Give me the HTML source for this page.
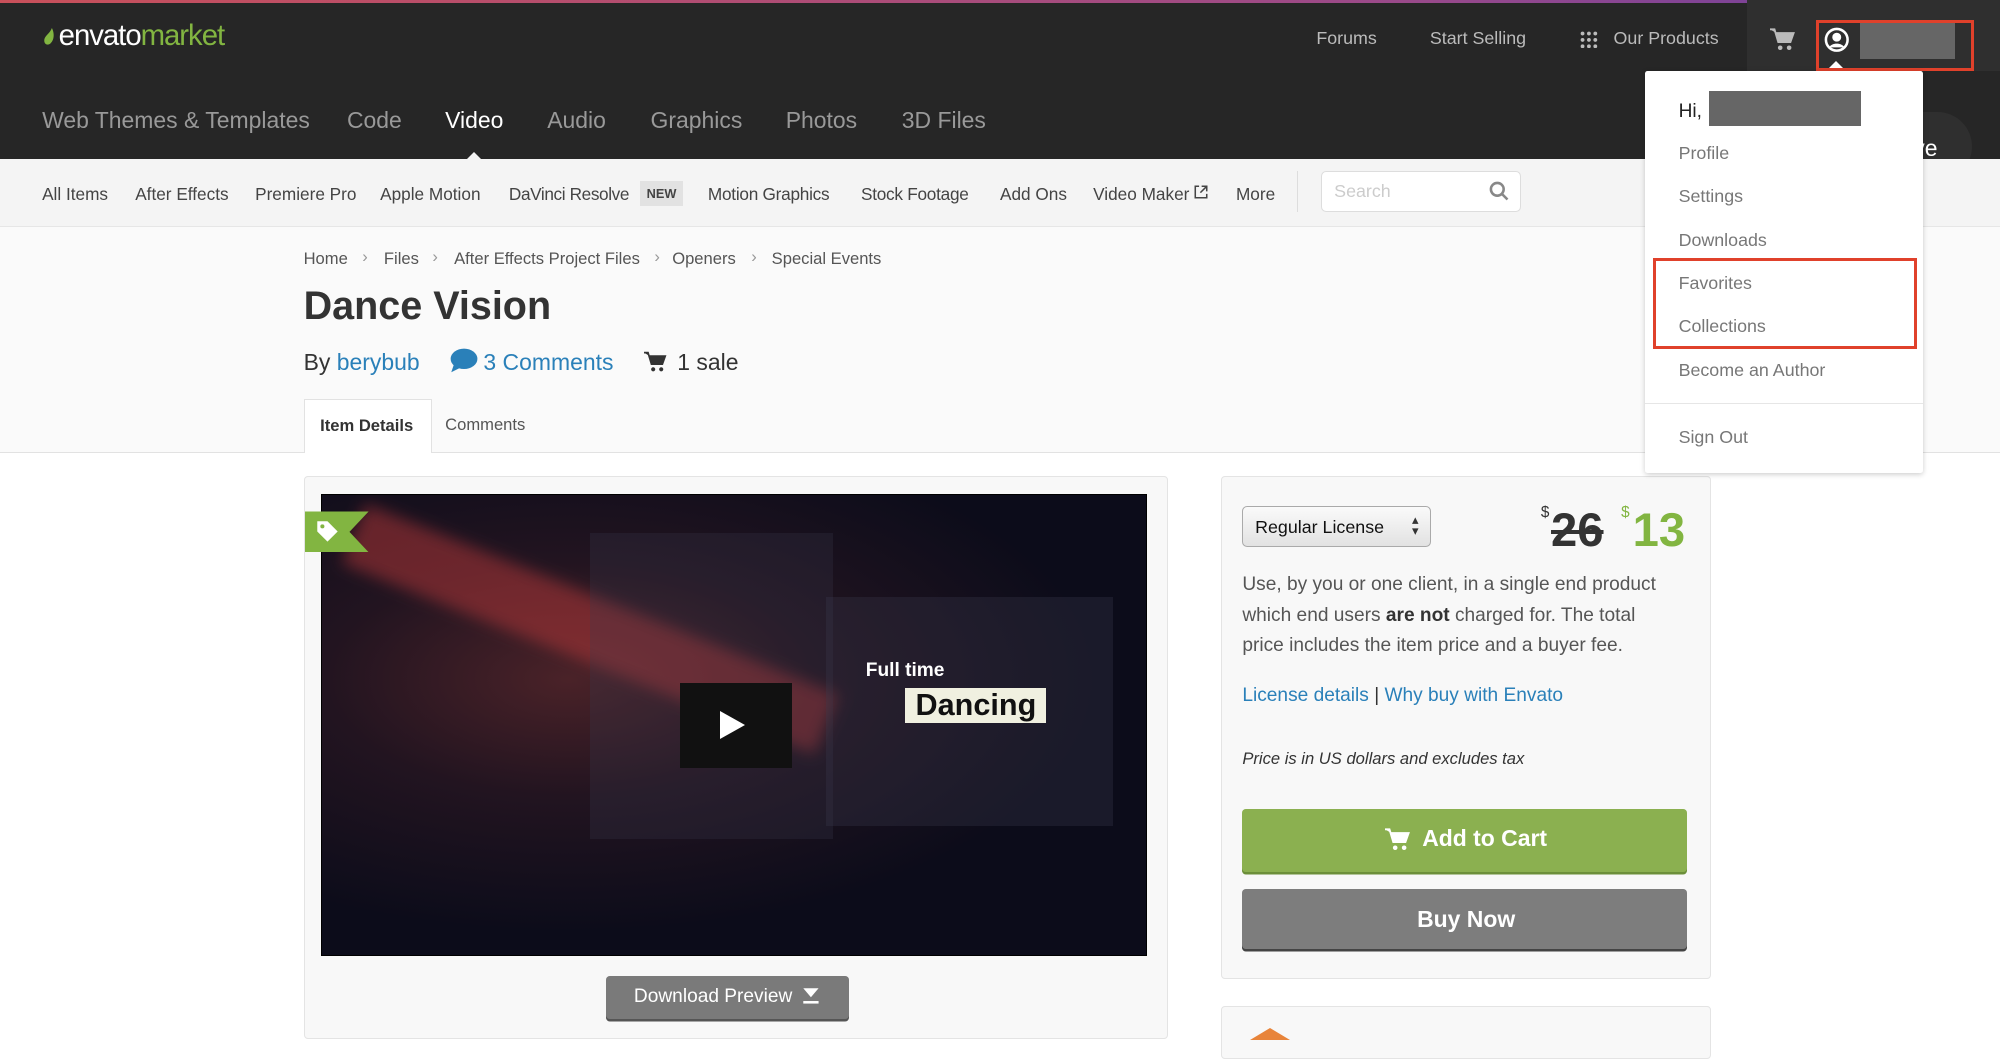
<!DOCTYPE html>
<html><head><meta charset="utf-8"><style>
html{zoom:1.27551}
body{margin:0;width:1568px;height:816px;overflow:hidden;position:relative;background:#fff;font-family:"Liberation Sans",sans-serif;color:#333}
.a{position:absolute;white-space:nowrap}
.top{position:absolute;left:0;top:0;width:1568px;height:125px;background:#262626}
.grad{position:absolute;left:0;top:0;width:1568px;height:2px;background:linear-gradient(90deg,#c8505a,#9a4a8a 70%,#6a3ea0)}
.cat{font-size:18px;color:#999;top:84px}
.sub{position:absolute;left:0;top:125px;width:1568px;height:52px;background:#f4f4f4;border-bottom:1px solid #e6e6e6}
.hero{position:absolute;left:0;top:178px;width:1568px;height:176px;background:#fafafa;border-bottom:1px solid #e2e2e2}
.dd{position:absolute;left:1290px;top:56px;width:218px;height:315px;background:#fff;box-shadow:0 1px 4px rgba(0,0,0,.2);border-radius:2px}
.dd span{font-size:14px;color:#777;left:26px}
.red{position:absolute;border:3px solid #e0412b;box-sizing:border-box}
.s{font-size:13.5px;color:#444;top:144px}
</style></head><body>
<div class="top"></div><div class="grad"></div>
<svg class="a" style="left:34px;top:22px" width="10" height="14" viewBox="0 0 10 14"><path d="M7 0C9 4 9 9 6 12C4 14 1 13 1 10C1 6 5 5 7 0Z" fill="#82b541"/></svg>
<div class="a" style="left:46px;top:15px;font-size:23px;color:#fff;letter-spacing:-0.8px">envato<span style="color:#82b541">market</span></div>
<div class="a" style="left:1032px;top:22px;font-size:14px;color:#bbb">Forums</div>
<div class="a" style="left:1121px;top:22px;font-size:14px;color:#bbb">Start Selling</div>
<svg class="a" style="left:1239px;top:24px" width="14" height="14" viewBox="0 0 14 14" fill="#bbb"><circle cx="2" cy="2" r="1.5"/><circle cx="7" cy="2" r="1.5"/><circle cx="12" cy="2" r="1.5"/><circle cx="2" cy="7" r="1.5"/><circle cx="7" cy="7" r="1.5"/><circle cx="12" cy="7" r="1.5"/><circle cx="2" cy="12" r="1.5"/><circle cx="7" cy="12" r="1.5"/><circle cx="12" cy="12" r="1.5"/></svg>
<div class="a" style="left:1265px;top:22px;font-size:14px;color:#bbb">Our Products</div>
<div class="a" style="left:1370px;top:0;width:200px;height:56px;background:#2f2f2f"></div>
<svg class="a" style="left:1388px;top:22px" width="20" height="18" viewBox="0 0 20 18"><path d="M0 1h3.5l3 10h9.5l2.5-7H5" fill="#bbb" stroke="#bbb" stroke-width="1.5"/><circle cx="8" cy="15.5" r="1.8" fill="#bbb"/><circle cx="15" cy="15.5" r="1.8" fill="#bbb"/></svg>
<svg class="a" style="left:1430px;top:21px" width="20" height="20" viewBox="0 0 20 20"><circle cx="10" cy="10" r="8.5" fill="none" stroke="#fff" stroke-width="2"/><circle cx="10" cy="8" r="3.5" fill="#fff"/><path d="M4 16c2-4 10-4 12 0" fill="#fff"/></svg>
<div class="a" style="left:1458px;top:18px;width:75px;height:28px;background:#666"></div>
<div class="red" style="left:1424px;top:16px;width:124px;height:40px"></div>
<div class="a" style="left:1434px;top:48px;width:0;height:0;border:6px solid transparent;border-bottom-color:#fff;border-top:0"></div>
<div class="a cat" style="left:33px">Web Themes &amp; Templates</div>
<div class="a cat" style="left:272px">Code</div>
<div class="a cat" style="left:349px;color:#fff">Video</div>
<div class="a cat" style="left:429px">Audio</div>
<div class="a cat" style="left:510px">Graphics</div>
<div class="a cat" style="left:616px">Photos</div>
<div class="a cat" style="left:707px">3D Files</div>
<div class="a" style="left:1480px;top:88px;width:66px;height:54px;background:#2f2f2f;border-radius:0 27px 27px 0"></div>
<div class="a" style="left:1500px;top:106px;font-size:18px;color:#fff">ve</div>
<div class="sub"></div>
<div class="a" style="left:366px;top:119px;border:6px solid transparent;border-bottom-color:#f4f4f4;border-top:0"></div>
<span class="a s" style="left:33px">All Items</span>
<span class="a s" style="left:106px">After Effects</span>
<span class="a s" style="left:200px">Premiere Pro</span>
<span class="a s" style="left:298px">Apple Motion</span>
<span class="a s" style="left:399px;letter-spacing:-0.3px">DaVinci Resolve</span>
<span class="a" style="left:502px;top:142px;font-size:10px;color:#444;background:#e2e2e2;padding:4px 5px;font-weight:bold">NEW</span>
<span class="a s" style="left:555px;letter-spacing:-0.2px">Motion Graphics</span>
<span class="a s" style="left:675px;letter-spacing:-0.2px">Stock Footage</span>
<span class="a s" style="left:784px">Add Ons</span>
<span class="a s" style="left:857px">Video Maker</span>
<svg class="a" style="left:936px;top:145px" width="11" height="11" viewBox="0 0 11 11"><path d="M4 1H1v9h9V7M6 1h4v4M10 1L5 6" fill="none" stroke="#444" stroke-width="1.2"/></svg>
<span class="a s" style="left:969px">More</span>
<div class="a" style="left:1017px;top:134px;width:1px;height:32px;background:#ddd"></div>
<div class="a" style="left:1036px;top:134px;width:155px;height:31px;background:#fff;border:1px solid #ddd;border-radius:4px"></div>
<div class="a" style="left:1046px;top:142px;font-size:14px;color:#ccc">Search</div>
<svg class="a" style="left:1167px;top:142px" width="16" height="16" viewBox="0 0 16 16"><circle cx="6.5" cy="6.5" r="5" fill="none" stroke="#888" stroke-width="2"/><path d="M10 10l4.5 4.5" stroke="#888" stroke-width="2"/></svg>
<div class="hero"></div>
<div class="a" style="left:238px;top:195px;font-size:13px;color:#555">Home</div>
<div class="a" style="left:301px;top:195px;font-size:13px;color:#555">Files</div>
<div class="a" style="left:356px;top:195px;font-size:13px;color:#555">After Effects Project Files</div>
<div class="a" style="left:527px;top:195px;font-size:13px;color:#555">Openers</div>
<div class="a" style="left:605px;top:195px;font-size:13px;color:#555">Special Events</div>
<div class="a" style="left:284px;top:194px;font-size:13px;color:#999">›</div>
<div class="a" style="left:339px;top:194px;font-size:13px;color:#999">›</div>
<div class="a" style="left:513px;top:194px;font-size:13px;color:#999">›</div>
<div class="a" style="left:589px;top:194px;font-size:13px;color:#999">›</div>
<div class="a" style="left:238px;top:223px;font-size:31px;font-weight:bold;color:#333">Dance Vision</div>
<div class="a" style="left:238px;top:274px;font-size:18px;color:#333">By <span style="color:#2a80b9">berybub</span></div>
<svg class="a" style="left:353px;top:273px" width="22" height="20" viewBox="0 0 22 20"><ellipse cx="11" cy="8.5" rx="10.5" ry="8" fill="#2a80b9"/><path d="M3 13L1 19L9 15Z" fill="#2a80b9"/></svg>
<div class="a" style="left:379px;top:274px;font-size:18px;color:#2a80b9">3 Comments</div>
<svg class="a" style="left:505px;top:275px" width="18" height="17" viewBox="0 0 20 18"><path d="M0 1h3.5l3 10h9.5l2.5-7H5" fill="#333" stroke="#333" stroke-width="1.5"/><circle cx="8" cy="15.5" r="1.8" fill="#333"/><circle cx="15" cy="15.5" r="1.8" fill="#333"/></svg>
<div class="a" style="left:531px;top:274px;font-size:18px;color:#333">1 sale</div>
<div class="a" style="left:238px;top:313px;width:101px;height:42px;background:#fff;border:1px solid #e2e2e2;border-bottom:none;box-sizing:border-box"></div>
<div class="a" style="left:251px;top:326px;font-size:13px;font-weight:bold">Item Details</div>
<div class="a" style="left:349px;top:325px;font-size:13px;color:#555">Comments</div>
<div class="a" style="left:238px;top:373px;width:676px;height:440px;background:#f8f8f8;border:1px solid #e4e4e4;border-radius:3px"></div>
<div class="a" style="left:252px;top:387px;width:646px;height:361px;background:radial-gradient(ellipse at 30% 40%,#4a2228 0%,#221420 30%,#0c0c1a 65%),#0b0b18;overflow:hidden;border:1px solid #000">
<div class="a" style="left:10px;top:80px;width:400px;height:50px;background:rgba(200,60,60,.45);transform:rotate(22deg);filter:blur(6px)"></div>
<div class="a" style="left:210px;top:30px;width:190px;height:240px;background:rgba(60,60,80,.25)"></div>
<div class="a" style="left:395px;top:80px;width:225px;height:180px;background:rgba(60,60,80,.3)"></div>
<div class="a" style="left:426px;top:130px;font-size:15px;font-weight:bold;color:#fff">Full time</div>
<div class="a" style="left:457px;top:152px;padding:0 8px;background:#f0f0e0;font-size:24px;font-weight:bold;color:#111">Dancing</div>
<div class="a" style="left:280px;top:148px;width:88px;height:66px;background:#111"></div>
<div class="a" style="left:312px;top:170px;border:11px solid transparent;border-left:20px solid #fff;border-right:0"></div>
</div>
<div class="a" style="left:239px;top:401px;width:50px;height:32px;background:#82b541;clip-path:polygon(0 0,100% 0,70% 50%,100% 100%,0 100%)"></div>
<svg class="a" style="left:248px;top:408px" width="18" height="18" viewBox="0 0 18 18"><path d="M1 1h8l8 8-8 8-8-8Z" fill="#fff" transform="rotate(0)"/><circle cx="5" cy="5" r="1.6" fill="#82b541"/></svg>
<div class="a" style="left:475px;top:765px;width:191px;height:34px;background:#7a7a7a;border-radius:3px;box-shadow:0 2px 0 #555"></div>
<div class="a" style="left:497px;top:773px;font-size:15px;color:#fff">Download Preview</div>
<svg class="a" style="left:629px;top:774px" width="14" height="14" viewBox="0 0 14 14"><path d="M1 1h12L7 8Z" fill="#fff"/><rect x="1" y="11" width="12" height="2" fill="#fff"/></svg>
<div class="a" style="left:957px;top:373px;width:383px;height:393px;background:#f8f8f8;border:1px solid #e4e4e4;border-radius:3px"></div>
<div class="a" style="left:974px;top:397px;width:148px;height:32px;background:linear-gradient(#fafafa,#e2e2e2);border:1px solid #aaa;border-radius:4px;box-sizing:border-box"></div>
<div class="a" style="left:984px;top:405px;font-size:14px;color:#111">Regular License</div>
<div class="a" style="left:1107px;top:404px;font-size:10px;color:#333;line-height:8px">▴<br>▾</div>
<div class="a" style="left:1208px;top:395px;font-size:12px;color:#333">$</div>
<div class="a" style="left:1216px;top:394px;font-size:37px;font-weight:bold;color:#333;text-decoration:line-through">26</div>
<div class="a" style="left:1271px;top:395px;font-size:12px;color:#82b541">$</div>
<div class="a" style="left:1280px;top:394px;font-size:37px;font-weight:bold;color:#82b541">13</div>
<div class="a" style="left:974px;top:447px;font-size:15px;color:#555;line-height:24px;white-space:normal;width:330px">Use, by you or one client, in a single end product which end users <b style="color:#333">are not</b> charged for. The total price includes the item price and a buyer fee.</div>
<div class="a" style="left:974px;top:537px;font-size:15px;color:#2a80b9">License details <span style="color:#333">|</span> Why buy with Envato</div>
<div class="a" style="left:974px;top:587px;font-size:13px;font-style:italic;color:#333">Price is in US dollars and excludes tax</div>
<div class="a" style="left:974px;top:634px;width:349px;height:50px;background:#8bb050;border-radius:3px;box-shadow:0 2px 0 #6c8f3a"></div>
<svg class="a" style="left:1086px;top:649px" width="20" height="18" viewBox="0 0 20 18"><path d="M0 1h3.5l3 10h9.5l2.5-7H5" fill="#fff" stroke="#fff" stroke-width="1.5"/><circle cx="8" cy="15.5" r="1.8" fill="#fff"/><circle cx="15" cy="15.5" r="1.8" fill="#fff"/></svg>
<div class="a" style="left:1115px;top:647px;font-size:18px;font-weight:bold;color:#fff">Add to Cart</div>
<div class="a" style="left:974px;top:697px;width:349px;height:47px;background:#7d7d7d;border-radius:3px;box-shadow:0 2px 0 #444"></div>
<div class="a" style="left:1111px;top:710px;font-size:18px;font-weight:bold;color:#fff">Buy Now</div>
<div class="a" style="left:957px;top:789px;width:383px;height:40px;background:#f8f8f8;border:1px solid #e4e4e4;border-radius:3px"></div>
<div class="a" style="left:980px;top:806px;border:16px solid transparent;border-bottom:10px solid #e8843a;border-top:0"></div>
<div class="dd">
<span class="a" style="top:23px;color:#222;font-size:15px">Hi,</span>
<div class="a" style="left:50px;top:15px;width:119px;height:28px;background:#666"></div>
<span class="a" style="top:56px">Profile</span>
<span class="a" style="top:90px">Settings</span>
<span class="a" style="top:124px">Downloads</span>
<span class="a" style="top:158px">Favorites</span>
<span class="a" style="top:192px">Collections</span>
<span class="a" style="top:226px">Become an Author</span>
<div class="a" style="left:0;top:260px;width:218px;height:1px;background:#e6e6e6"></div>
<span class="a" style="top:279px">Sign Out</span>
</div>
<div class="red" style="left:1296px;top:202px;width:207px;height:72px"></div>
</body></html>
